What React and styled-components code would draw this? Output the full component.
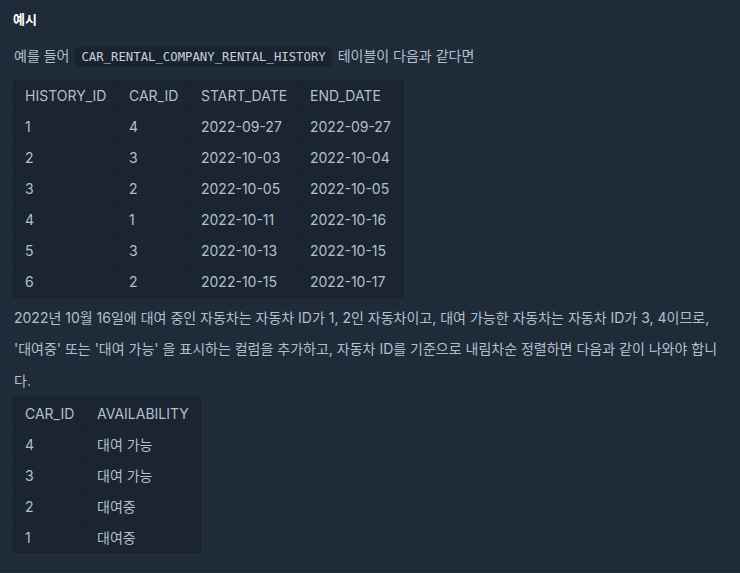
import React from "react";
import styled, { createGlobalStyle } from "styled-components";

const Global = createGlobalStyle`
  html, body { margin: 0; padding: 0; background: #202b3a; }
  body { font-family: Inter, "Noto Sans CJK KR", sans-serif; }
`;

const Page = styled.div`
  box-sizing: border-box;
  height: 571px;
  padding: 9px 13px 0 13px;
  background: #202b3a;
  border-bottom: 1px solid #172130;
  color: #b2c0cc;
  font-size: 14px;
`;

const Heading = styled.h5`
  margin: 0;
  font-size: 13px;
  font-weight: 700;
  color: #ffffff;
  line-height: 20px;
`;

const Para = styled.p`
  margin: ${(p) => p.$mt || 0}px 0 0 1px;
  line-height: 31.5px;
  font-size: 14px;
  color: #b2c0cc;
`;

const Code = styled.code`
  font-family: "DejaVu Sans Mono", "Liberation Mono", monospace;
  font-size: 12.3px;
  background: #1a2330;
  color: #c8d2dc;
  border-radius: 4px;
  padding: 3px 6px;
  margin: 0 2px;
`;

const Table = styled.table`
  border-collapse: collapse;
  background: #1b2431;
  margin-top: ${(p) => p.$mt || 0}px;
  font-size: 14px;
  color: #b2c0cc;
`;

const Row = styled.tr`
  height: 31px;
`;

const Cell = styled.td`
  border: 1px solid #172130;
  padding: 0 8px 0 11px;
  text-align: left;
  white-space: nowrap;
  font-weight: 400;
  width: ${(p) => (p.$w ? `${p.$w}px` : "auto")};
  box-sizing: border-box;
`;

const history = [
  ["1", "4", "2022-09-27", "2022-09-27"],
  ["2", "3", "2022-10-03", "2022-10-04"],
  ["3", "2", "2022-10-05", "2022-10-05"],
  ["4", "1", "2022-10-11", "2022-10-16"],
  ["5", "3", "2022-10-13", "2022-10-15"],
  ["6", "2", "2022-10-15", "2022-10-17"],
];

const result = [
  ["4", "대여 가능"],
  ["3", "대여 가능"],
  ["2", "대여중"],
  ["1", "대여중"],
];

export default function App() {
  return (
    <>
      <Global />
      <Page>
        <Heading>예시</Heading>
        <Para $mt={11}>
          예를 들어 <Code>CAR_RENTAL_COMPANY_RENTAL_HISTORY</Code> 테이블이 다음과 같다면
        </Para>
        <Table $mt={6}>
          <thead>
            <Row>
              <Cell as="th" $w={104}>HISTORY_ID</Cell>
              <Cell as="th" $w={72}>CAR_ID</Cell>
              <Cell as="th" $w={109}>START_DATE</Cell>
              <Cell as="th" $w={105}>END_DATE</Cell>
            </Row>
          </thead>
          <tbody>
            {history.map((r) => (
              <Row key={r[0]}>
                {r.map((c, i) => (
                  <Cell key={i}>{c}</Cell>
                ))}
              </Row>
            ))}
          </tbody>
        </Table>
        <Para $mt={4}>
          2022년 10월 16일에 대여 중인 자동차는 자동차 ID가 1, 2인 자동차이고, 대여 가능한 자동차는 자동차 ID가 3, 4이므로, '대여중' 또는 '대여 가능' 을 표시하는 컬럼을 추가하고, 자동차 ID를 기준으로 내림차순 정렬하면 다음과 같이 나와야 합니다.
        </Para>
        <Table $mt={1}>
          <thead>
            <Row>
              <Cell as="th" $w={72}>CAR_ID</Cell>
              <Cell as="th" $w={115}>AVAILABILITY</Cell>
            </Row>
          </thead>
          <tbody>
            {result.map((r, k) => (
              <Row key={k}>
                {r.map((c, i) => (
                  <Cell key={i}>{c}</Cell>
                ))}
              </Row>
            ))}
          </tbody>
        </Table>
      </Page>
    </>
  );
}
